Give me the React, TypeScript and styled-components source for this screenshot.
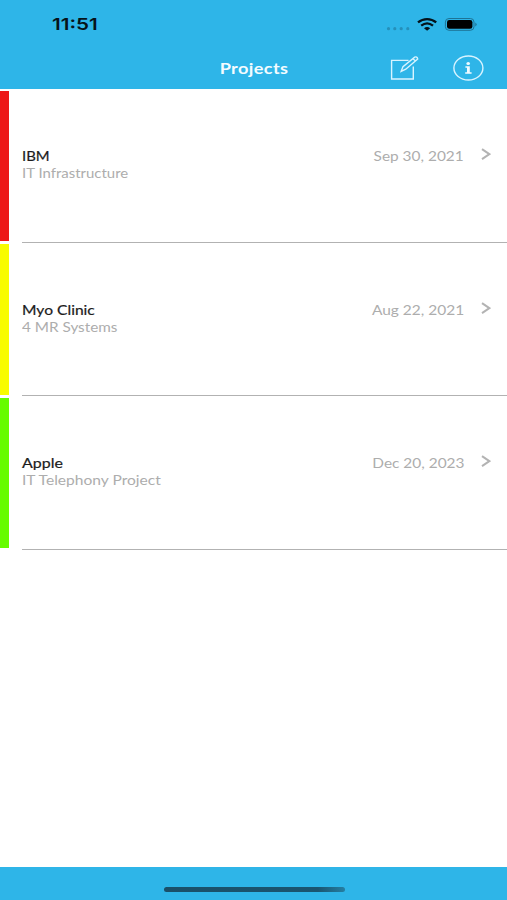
import React from "react";
import styled, { createGlobalStyle } from "styled-components";

const Global = createGlobalStyle`
  * { box-sizing: border-box; }
  html, body { margin: 0; background: #fff; }
`;

const Screen = styled.main`
  width: 507px;
  height: 900px;
  display: flex;
  flex-direction: column;
  overflow: hidden;
  background: #fff;
  font-family: Lato, "Liberation Sans", sans-serif;
`;

const Header = styled.header`
  height: 89px;
  flex: none;
  background: #2eb5e8;
`;

const StatusBar = styled.div`
  height: 48px;
  padding: 0 30px 0 52px;
  display: flex;
  align-items: center;
  justify-content: space-between;
`;

const Label = styled.span<{ $stretch: number; $origin?: string }>`
  display: block;
  white-space: nowrap;
  transform: scaleX(${(p) => p.$stretch});
  transform-origin: ${(p) => p.$origin ?? "left"} center;
`;

const Clock = styled(Label)`
  font: 600 16.5px/20px Inter, sans-serif;
  color: #06131a;
`;

const StatusIcons = styled.div`
  display: flex;
  align-items: center;
`;

const NavBar = styled.nav`
  height: 39px;
  display: grid;
  grid-template-columns: 1fr 150px 1fr;
  align-items: center;
`;

const Title = styled(Label)`
  grid-column: 2;
  text-align: center;
  font-weight: 700;
  font-size: 15px;
  letter-spacing: 0.3px;
  line-height: 20px;
  color: #f4fcff;
`;

const Actions = styled.div`
  display: flex;
  justify-content: flex-end;
  gap: 33px;
  padding-right: 23px;
`;

const IconButton = styled.button`
  display: flex;
  padding: 0;
  border: 0;
  background: none;
`;

const List = styled.section`
  flex: 1;
`;

const Row = styled.article`
  height: 153.5px;
  display: flex;
`;

const StatusStripe = styled.div<{ $color: string }>`
  width: 8.6px;
  margin: 1.7px 13.2px 1.5px 0;
  flex: none;
  background: ${(p) => p.$color};
`;

const RowBody = styled.div`
  flex: 1;
  display: flex;
  justify-content: space-between;
  padding: 58px 16px 0 0;
  border-bottom: 1px solid #b2b2b2;
`;

const Name = styled(Label)`
  font-size: 13.3px;
  line-height: 18px;
  font-weight: 400;
  color: #1c1c1c;
  -webkit-text-stroke: 0.2px #1c1c1c;
`;

const Detail = styled(Label)`
  font-size: 13.3px;
  line-height: 17px;
  color: #adadad;
`;

const Trailing = styled.div`
  display: flex;
  gap: 17px;
`;

const DateText = styled(Label)`
  font-size: 13.3px;
  line-height: 18px;
  color: #adadad;
`;

const Chevron = styled.svg`
  margin-top: 1px;
  flex: none;
`;

const Footer = styled.footer`
  height: 33px;
  flex: none;
  display: flex;
  justify-content: center;
  align-items: flex-end;
  padding-bottom: 8px;
  background: #2eb5e8;
`;

const HomeIndicator = styled.div`
  width: 181px;
  height: 5px;
  margin-left: 1px;
  border-radius: 3px;
  background: linear-gradient(90deg, #1a5069 0%, #1a5570 85%, #247fa3 100%);
`;

const projects = [
  { name: "IBM", nameStretch: 1.12, detail: "IT Infrastructure", detailStretch: 1.125, date: "Sep 30, 2021", dateStretch: 1.16, color: "#ed1717" },
  { name: "Myo Clinic", nameStretch: 1.175, detail: "4 MR Systems", detailStretch: 1.15, date: "Aug 22, 2021", dateStretch: 1.165, color: "#f8fc00" },
  { name: "Apple", nameStretch: 1.2, detail: "IT Telephony Project", detailStretch: 1.172, date: "Dec 20, 2023", dateStretch: 1.16, color: "#66fc00" },
];

export default function App() {
  return (
    <Screen>
      <Global />
      <Header>
        <StatusBar>
          <Clock $stretch={1.25}>11:51</Clock>
          <StatusIcons>
            <svg width="92" height="18" viewBox="385 15 92 18">
              <g fill="#2590ba">
                <circle cx="388.5" cy="28.7" r="1.6" />
                <circle cx="394.8" cy="28.7" r="1.6" />
                <circle cx="401.2" cy="28.7" r="1.6" />
                <circle cx="407.8" cy="28.7" r="1.6" />
              </g>
              <g fill="none" stroke="#04121a" strokeWidth="2.3">
                <path d="M418 22.4C423.4 17.9 430.8 17.9 436.2 22.4" />
                <path d="M421.2 25.7C424.8 22.9 429.4 22.9 433 25.7" />
              </g>
              <path d="M424 28.2Q427.1 26 430.2 28.2L427.1 30.8Z" fill="#04121a" />
              <rect x="445.4" y="18.5" width="28.6" height="11.8" rx="3.6" fill="none" stroke="#1d7395" />
              <rect x="447" y="20" width="25.4" height="8.8" rx="2.3" fill="#000" />
              <path d="M475.3 22.6Q478 24.4 475.3 26.4Z" fill="#1d7395" />
            </svg>
          </StatusIcons>
        </StatusBar>
        <NavBar>
          <Title $stretch={1.21} $origin="center">Projects</Title>
          <Actions>
            <IconButton aria-label="New project">
              <svg width="30" height="26" viewBox="390 55 30 26" fill="none" stroke="#d9f4ff" strokeWidth="1.4">
                <path d="M408.5 60.4H391.6V79H413.3V66.5" />
                <path d="M401.2 71.3L403 66.6L414.7 57.1Q417 56.3 417.7 59L405.8 69.2ZM412.8 58.7L416 61.2" />
              </svg>
            </IconButton>
            <IconButton aria-label="Information">
              <svg width="31" height="26" viewBox="453 55 31 26">
                <ellipse cx="468.4" cy="68" rx="14.5" ry="12" fill="none" stroke="#d9f4ff" strokeWidth="1.4" />
                <ellipse cx="468.2" cy="63.4" rx="1.8" ry="1.5" fill="#effaff" />
                <path d="M465.4 66.3H469.8V72.3H471.6V73.8H465.2V72.3H467V67.8H465.4Z" fill="#effaff" />
              </svg>
            </IconButton>
          </Actions>
        </NavBar>
      </Header>
      <List>
        {projects.map((p) => (
          <Row key={p.name}>
            <StatusStripe $color={p.color} />
            <RowBody>
              <div>
                <Name $stretch={p.nameStretch}>{p.name}</Name>
                <Detail $stretch={p.detailStretch}>{p.detail}</Detail>
              </div>
              <Trailing>
                <DateText $stretch={p.dateStretch} $origin="right">{p.date}</DateText>
                <Chevron width="10" height="13" viewBox="0 0 10 13">
                  <path d="M1 1.2L8.4 6.2L1 11.2" fill="none" stroke="#b3b3b3" strokeWidth="2" />
                </Chevron>
              </Trailing>
            </RowBody>
          </Row>
        ))}
      </List>
      <Footer>
        <HomeIndicator />
      </Footer>
    </Screen>
  );
}
